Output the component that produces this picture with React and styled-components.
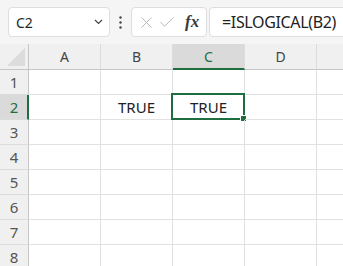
import React from "react";
import styled, {createGlobalStyle} from "styled-components";

const GlobalStyle = createGlobalStyle`
    body {
        margin: 0;
        background: #ffffff;
        font-family: "Noto Sans", "Liberation Sans", sans-serif;
    }
`;

const GREEN = "#1e6e42";
// last column is only partly in view, so its label is left out
const COLS = ["A", "B", "C", "D", ""];
const ROWS = [1, 2, 3, 4, 5, 6, 7, 8];

// Toolbar with name box and formula bar
const Window = styled.div`
    width: 343px;
    height: 266px;
    overflow: hidden;
    background: #ffffff;
`;

const Toolbar = styled.div`
    display: flex;
    align-items: center;
    height: 44px;
    padding-left: 8px;
    background: #f5f5f5;
`;

const Box = styled.div`
    display: flex;
    align-items: center;
    height: 30px;
    box-sizing: border-box;
    background: #ffffff;
    border: 1px solid #dedede;
    border-radius: 4px;
`;

const NameBox = styled(Box)`
    width: 102px;
    padding: 0 6px 0 7px;
    justify-content: space-between;
    font-size: 14px;
    color: #262626;
`;

const Grip = styled.div`
    display: flex;
    justify-content: center;
    width: 21px;
`;

const ButtonsBox = styled(Box)`
    width: 76px;
    padding-left: 9px;
    gap: 8px;
`;

const Fx = styled.span`
    margin-left: 3px;
    font-family: "Liberation Serif", serif;
    font-style: italic;
    font-weight: bold;
    font-size: 17px;
    color: #3a3a3a;
`;

const FormulaBox = styled(Box)`
    flex: 1;
    margin-left: 2px;
    margin-right: -12px;
    padding-left: 12px;
    font-size: 16px;
    letter-spacing: -0.35px;
    color: #222;
`;

// Sheet grid
const Sheet = styled.div`
    display: grid;
    grid-template-columns: 29px repeat(5, 72px);
    grid-template-rows: 26px repeat(8, 25px);
`;

const Corner = styled.div`
    position: relative;
    box-sizing: border-box;
    background: #f0f0f0;
    border-right: 1px solid #c6c6c6;
    border-bottom: 1px solid #c6c6c6;
`;

const Triangle = styled.div`
    position: absolute;
    right: 3px;
    bottom: 3px;
    width: 0;
    height: 0;
    border-left: 18px solid transparent;
    border-bottom: 18px solid #dcdcdc;
`;

const ColHead = styled.div`
    display: flex;
    align-items: center;
    justify-content: center;
    box-sizing: border-box;
    font-size: 14px;
    color: ${p => (p.$active ? GREEN : "#444")};
    background: ${p => (p.$active ? "#dadada" : "#f0f0f0")};
    border-right: 1px solid #dcdcdc;
    border-bottom: ${p => (p.$active ? `2px solid ${GREEN}` : "1px solid #c6c6c6")};
    padding-top: ${p => (p.$active ? "1px" : "0")};
`;

const RowHead = styled.div`
    display: flex;
    align-items: center;
    justify-content: center;
    box-sizing: border-box;
    font-size: 15px;
    color: ${p => (p.$active ? GREEN : "#555")};
    background: ${p => (p.$active ? "#dadada" : "#f0f0f0")};
    border-bottom: 1px solid #dcdcdc;
    border-right: ${p => (p.$active ? `2px solid ${GREEN}` : "1px solid #c6c6c6")};
    padding-left: ${p => (p.$active ? "1px" : "0")};
`;

const Cell = styled.div`
    position: relative;
    display: flex;
    align-items: center;
    justify-content: center;
    box-sizing: border-box;
    font-size: 15px;
    color: #222;
    border-right: 1px solid #e1e1e1;
    border-bottom: 1px solid #e1e1e1;
`;

const Selection = styled.div`
    position: absolute;
    left: -2px;
    top: -2px;
    right: -1px;
    bottom: -1px;
    border: 2px solid ${GREEN};
`;

const Handle = styled.div`
    position: absolute;
    right: -4px;
    bottom: -4px;
    width: 5px;
    height: 5px;
    background: ${GREEN};
    border: 1px solid #ffffff;
`;

const Chevron = () => (
    <svg width="9" height="6" viewBox="0 0 9 6">
        <path d="M1 1l3.5 3.5L8 1" fill="none" stroke="#444" strokeWidth="1.2" />
    </svg>
);

const Dots = () => (
    <svg width="3" height="13" viewBox="0 0 3 13">
        <circle cx="1.5" cy="1.5" r="1.2" fill="#444" />
        <circle cx="1.5" cy="6.5" r="1.2" fill="#444" />
        <circle cx="1.5" cy="11.5" r="1.2" fill="#444" />
    </svg>
);

const Cross = () => (
    <svg width="11" height="11" viewBox="0 0 11 11">
        <path d="M0.5 0.5l10 10M10.5 0.5l-10 10" stroke="#b8b8b8" strokeWidth="1" />
    </svg>
);

const Check = () => (
    <svg width="14" height="10" viewBox="0 0 14 10">
        <path d="M0.5 5l4 4.2L13.5 0.5" fill="none" stroke="#b8b8b8" strokeWidth="1" />
    </svg>
);

const values = {"B2": "TRUE", "C2": "TRUE"};

export default function App() {
    return (
        <Window>
            <GlobalStyle />
            <Toolbar>
                <NameBox>
                    <span>C2</span>
                    <Chevron />
                </NameBox>
                <Grip><Dots /></Grip>
                <ButtonsBox>
                    <Cross />
                    <Check />
                    <Fx>fx</Fx>
                </ButtonsBox>
                <FormulaBox>=ISLOGICAL(B2)</FormulaBox>
            </Toolbar>
            <Sheet>
                <Corner><Triangle /></Corner>
                {COLS.map((c, i) => (
                    <ColHead key={i} $active={c === "C"}>{c}</ColHead>
                ))}
                {ROWS.map(r => (
                    <React.Fragment key={r}>
                        <RowHead $active={r === 2}>{r}</RowHead>
                        {COLS.map((c, i) => {
                            const id = c + r;
                            return (
                                <Cell key={i}>
                                    {values[id]}
                                    {id === "C2" && (
                                        <Selection>
                                            <Handle />
                                        </Selection>
                                    )}
                                </Cell>
                            );
                        })}
                    </React.Fragment>
                ))}
            </Sheet>
        </Window>
    );
}
